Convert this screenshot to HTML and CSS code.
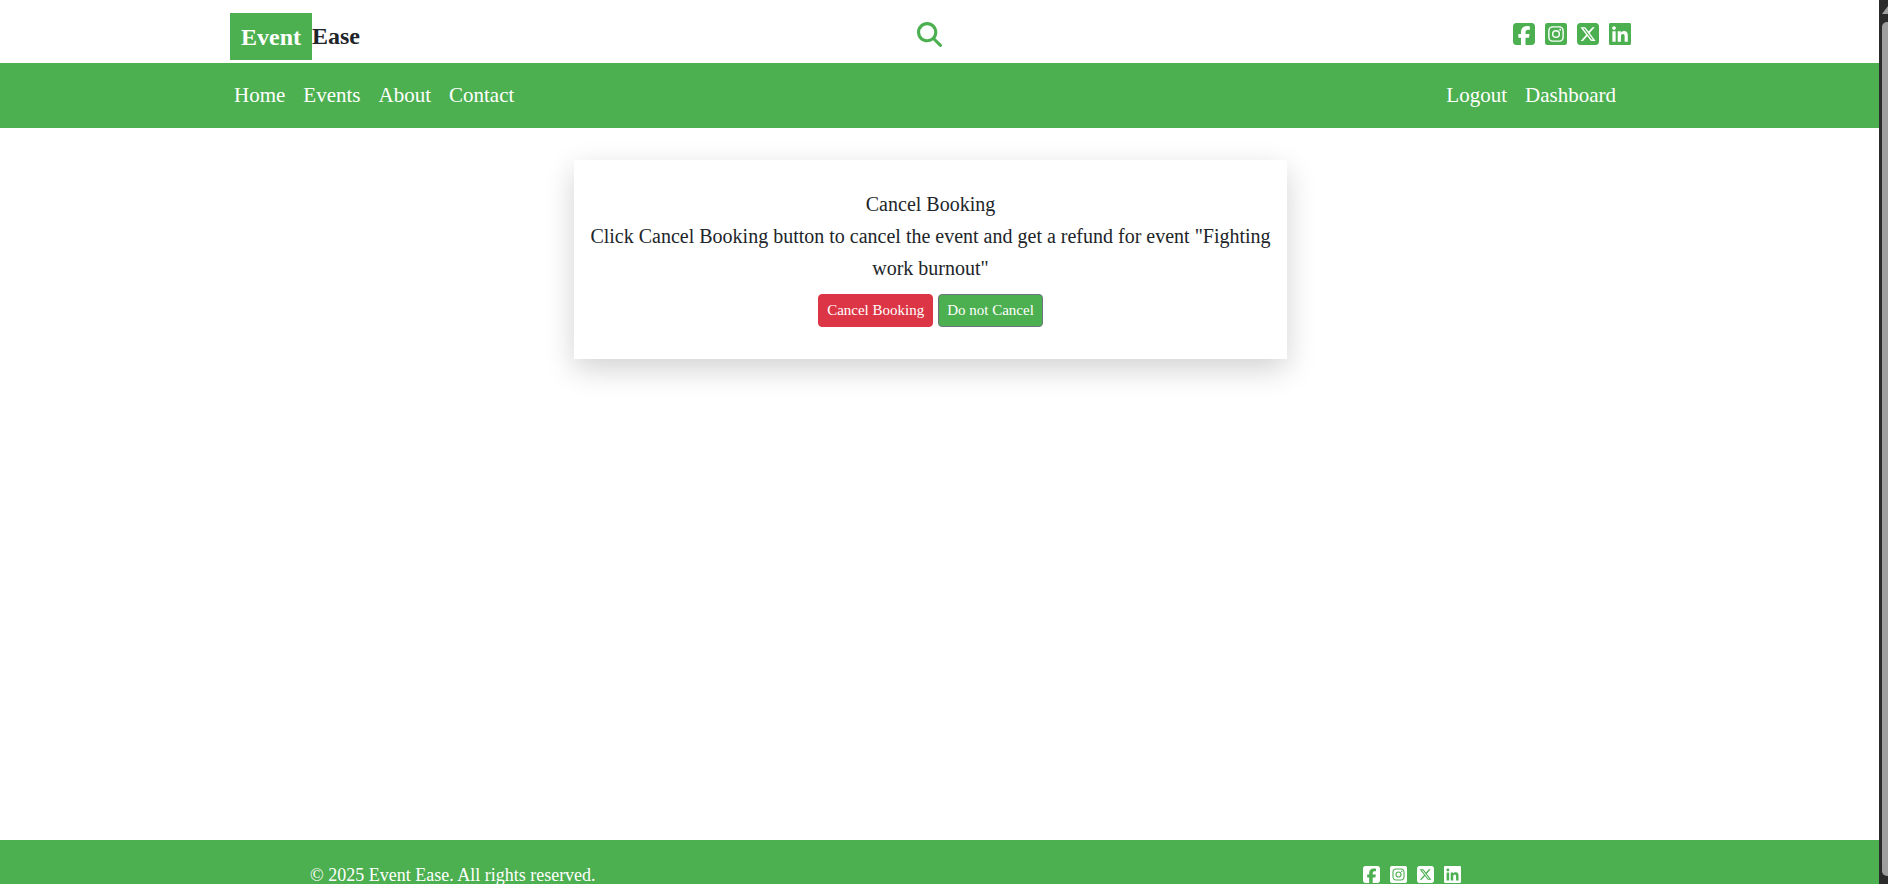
FILE: index.html
```html
<!DOCTYPE html>
<html lang="en">
<head>
<meta charset="utf-8">
<title>Event Ease - Cancel Booking</title>
<link rel="stylesheet" href="styles.css">
</head>
<body>
<svg class="sprite" aria-hidden="true">
  <symbol id="facebook" viewBox="0 32 448 448"><path d="M64 32C28.7 32 0 60.7 0 96V416c0 35.3 28.7 64 64 64h98.2V334.2H109.4V256h52.8V222.3c0-87.1 39.4-127.5 125-127.5c16.2 0 44.2 3.2 55.7 6.4V172c-6-.6-16.5-1-29.6-1c-42 0-58.2 15.9-58.2 57.2V256h83.6l-14.4 78.2H255V480H384c35.3 0 64-28.7 64-64V96c0-35.3-28.7-64-64-64H64z"/></symbol>
  <symbol id="instagram" viewBox="0 32 448 448"><path d="M224 202.66A53.34 53.34 0 1 0 277.36 256 53.38 53.38 0 0 0 224 202.66Zm124.71-41a54 54 0 0 0-30.41-30.41c-21-8.29-71-6.43-94.3-6.43s-73.25-1.93-94.31 6.43a54 54 0 0 0-30.41 30.41c-8.28 21-6.43 71.05-6.43 94.33S91 329.26 99.32 350.33a54 54 0 0 0 30.41 30.41c21 8.29 71 6.43 94.31 6.43s73.24 1.93 94.3-6.43a54 54 0 0 0 30.41-30.41c8.35-21 6.43-71.05 6.43-94.33S357.1 182.74 348.75 161.67ZM224 338a82 82 0 1 1 82-82A81.9 81.9 0 0 1 224 338Zm85.38-148.3a19.14 19.14 0 1 1 19.13-19.14A19.1 19.1 0 0 1 309.42 189.74ZM400 32H48A48 48 0 0 0 0 80V432a48 48 0 0 0 48 48H400a48 48 0 0 0 48-48V80A48 48 0 0 0 400 32ZM382.88 322c-1.29 25.63-7.14 48.34-25.85 67s-41.4 24.63-67 25.85c-26.41 1.49-105.59 1.49-132 0-25.63-1.29-48.26-7.15-67-25.85s-24.63-41.42-25.85-67c-1.49-26.42-1.49-105.61 0-132 1.29-25.63 7.07-48.34 25.85-67s41.47-24.56 67-25.78c26.41-1.49 105.59-1.49 132 0 25.63 1.29 48.33 7.15 67 25.85s24.63 41.42 25.85 67.05C384.37 216.44 384.37 295.56 382.88 322Z"/></symbol>
  <symbol id="x" viewBox="0 32 448 448"><path d="M64 32C28.7 32 0 60.7 0 96V416c0 35.3 28.7 64 64 64H384c35.3 0 64-28.7 64-64V96c0-35.3-28.7-64-64-64H64zm297.1 84L257.3 234.6 379.4 396H283.8L209 298.1 123.3 396H75.8l111-126.9L69.7 116h98l67.7 89.5L313.6 116h47.5zM323.3 367.6L153.4 142.9H125.1L296.9 367.6h26.3z"/></symbol>
  <symbol id="linkedin" viewBox="0 32 448 448"><path d="M416 32H31.9C14.3 32 0 46.5 0 64.3v383.4C0 465.5 14.3 480 31.9 480H416c17.6 0 32-14.5 32-32.3V64.3c0-17.8-14.4-32.3-32-32.3zM135.4 416H69V202.2h66.5V416zm-33.2-243c-21.3 0-38.5-17.3-38.5-38.5S80.9 96 102.2 96c21.2 0 38.5 17.3 38.5 38.5 0 21.3-17.2 38.5-38.5 38.5zm282.1 243h-66.4V312c0-24.8-.5-56.7-34.5-56.7-34.6 0-39.9 27-39.9 54.9V416h-66.4V202.2h63.7v29.2h.9c8.9-16.8 30.6-34.5 62.2-34.5 66.5 0 78.9 43.8 78.9 100.9V416z"/></symbol>
  <symbol id="search" viewBox="0 0 512 512"><path d="M416 208c0 45.9-14.9 88.3-40 122.7L502.6 457.4c12.5 12.5 12.5 32.8 0 45.3s-32.8 12.5-45.3 0L330.7 376c-34.4 25.2-76.8 40-122.7 40C93.1 416 0 322.9 0 208S93.1 0 208 0S416 93.1 416 208zM208 352a144 144 0 1 0 0-288 144 144 0 1 0 0 288z"/></symbol>
</svg>
<div class="page">
  <header class="band topbar">
    <div class="container topbar-inner">
      <a class="brand" href="#"><span class="brand-mark">Event</span><span class="brand-rest">Ease</span></a>
      <a class="search" href="#" aria-label="Search"><svg class="icon"><use href="#search"/></svg></a>
      <div class="social">
        <a href="#" aria-label="Facebook"><svg class="icon"><use href="#facebook"/></svg></a>
        <a href="#" aria-label="Instagram"><svg class="icon"><use href="#instagram"/></svg></a>
        <a href="#" aria-label="X"><svg class="icon"><use href="#x"/></svg></a>
        <a href="#" aria-label="LinkedIn"><svg class="icon"><use href="#linkedin"/></svg></a>
      </div>
    </div>
  </header>
  <nav class="band navbar">
    <div class="container navbar-inner">
      <div class="links"><a href="#">Home</a><a href="#">Events</a><a href="#">About</a><a href="#">Contact</a></div>
      <div class="links"><a href="#">Logout</a><a href="#">Dashboard</a></div>
    </div>
  </nav>
  <main class="band content">
    <section class="card">
      <p>Cancel Booking</p>
      <p>Click Cancel Booking button to cancel the event and get a refund for event "Fighting work burnout"</p>
      <div class="actions">
        <button class="btn btn-danger" type="button">Cancel Booking</button>
        <a class="btn btn-keep" href="#">Do not Cancel</a>
      </div>
    </section>
  </main>
  <footer class="band footer">
    <div class="container footer-inner">
      <p>© 2025 Event Ease. All rights reserved.</p>
      <div class="social social-small">
        <a href="#" aria-label="Facebook"><svg class="icon"><use href="#facebook"/></svg></a>
        <a href="#" aria-label="Instagram"><svg class="icon"><use href="#instagram"/></svg></a>
        <a href="#" aria-label="X"><svg class="icon"><use href="#x"/></svg></a>
        <a href="#" aria-label="LinkedIn"><svg class="icon"><use href="#linkedin"/></svg></a>
      </div>
    </div>
  </footer>
</div>
<div class="scrollbar" aria-hidden="true"><div class="scroll-arrow"></div><div class="scroll-thumb"></div></div>
</body>
</html>
```
FILE: styles.css
```css
* { box-sizing: border-box; }

body {
  margin: 0;
  height: 100vh;
  display: flex;
  overflow: hidden;
  background: #fff;
  color: #212529;
  font: 20px/32px "Liberation Serif", "Times New Roman", serif;
}

p { margin: 0; }
a { color: inherit; text-decoration: none; }
.sprite { display: none; }
.icon { display: block; width: 22px; height: 22px; fill: currentColor; }

.page {
  flex: 1;
  min-width: 0;
  display: flex;
  flex-direction: column;
  overflow: hidden;
}

.band { padding-right: 18px; flex-shrink: 0; }
.container { width: 100%; max-width: 1401px; margin: 0 auto; }

.topbar-inner {
  display: grid;
  grid-template-columns: 1fr auto 1fr;
  padding: 13px 0 3px;
}
.brand {
  justify-self: start;
  display: flex;
  font-size: 24px;
  font-weight: bold;
}
.brand-mark {
  padding: 4px 11px 3px;
  background: #4caf50;
  color: #fff;
  line-height: 40px;
}
.brand-rest { line-height: 46px; }
.search { padding: 9px 2px 0 0; color: #4caf50; }
.search .icon { width: 25px; height: 25px; }
.social {
  display: flex;
  justify-self: end;
  gap: 10px;
  padding-top: 10px;
  color: #4caf50;
}

.navbar, .footer { background: #4caf50; color: #fff; }
.navbar-inner {
  display: flex;
  justify-content: space-between;
  padding: 16px 15px 17px 4px;
  font-size: 21px;
}
.links { display: flex; gap: 18px; }

.content { flex: 1 0 auto; padding-top: 32px; }
.card {
  max-width: 713px;
  margin: 0 auto;
  padding: 28px 14px 32px;
  text-align: center;
  background: #fff;
  box-shadow: 0 10px 28px rgba(0, 0, 0, .18);
}
.actions { display: flex; justify-content: center; gap: 5px; padding-top: 10px; }
.btn {
  padding: 4px 8px;
  border: 1px solid;
  border-radius: 4px;
  color: #fff;
  font: 15px/23px "Liberation Serif", "Times New Roman", serif;
}
.btn-danger { background: #dc3545; border-color: #dc3545; }
.btn-keep { background: #4caf50; border-color: #6c757d; }

.footer { height: 44px; }
.footer-inner {
  display: flex;
  justify-content: space-between;
  padding: 19px 170px 0 80px;
  font-size: 18px;
}
.social-small { padding-top: 7px; color: #fff; }
.social-small .icon { width: 17px; height: 17px; }

.scrollbar {
  width: 9px;
  display: flex;
  flex-direction: column;
  align-items: flex-end;
  padding: 6px 0 8px;
  background: #2b2b2b;
}
.scroll-arrow {
  width: 6px;
  height: 8px;
  margin-bottom: 8px;
  background: #9f9f9f;
  clip-path: polygon(0 100%, 100% 0, 100% 100%);
}
.scroll-thumb {
  width: 6px;
  flex: 1;
  background: #9f9f9f;
  border-radius: 5px 0 0 5px;
}
```
